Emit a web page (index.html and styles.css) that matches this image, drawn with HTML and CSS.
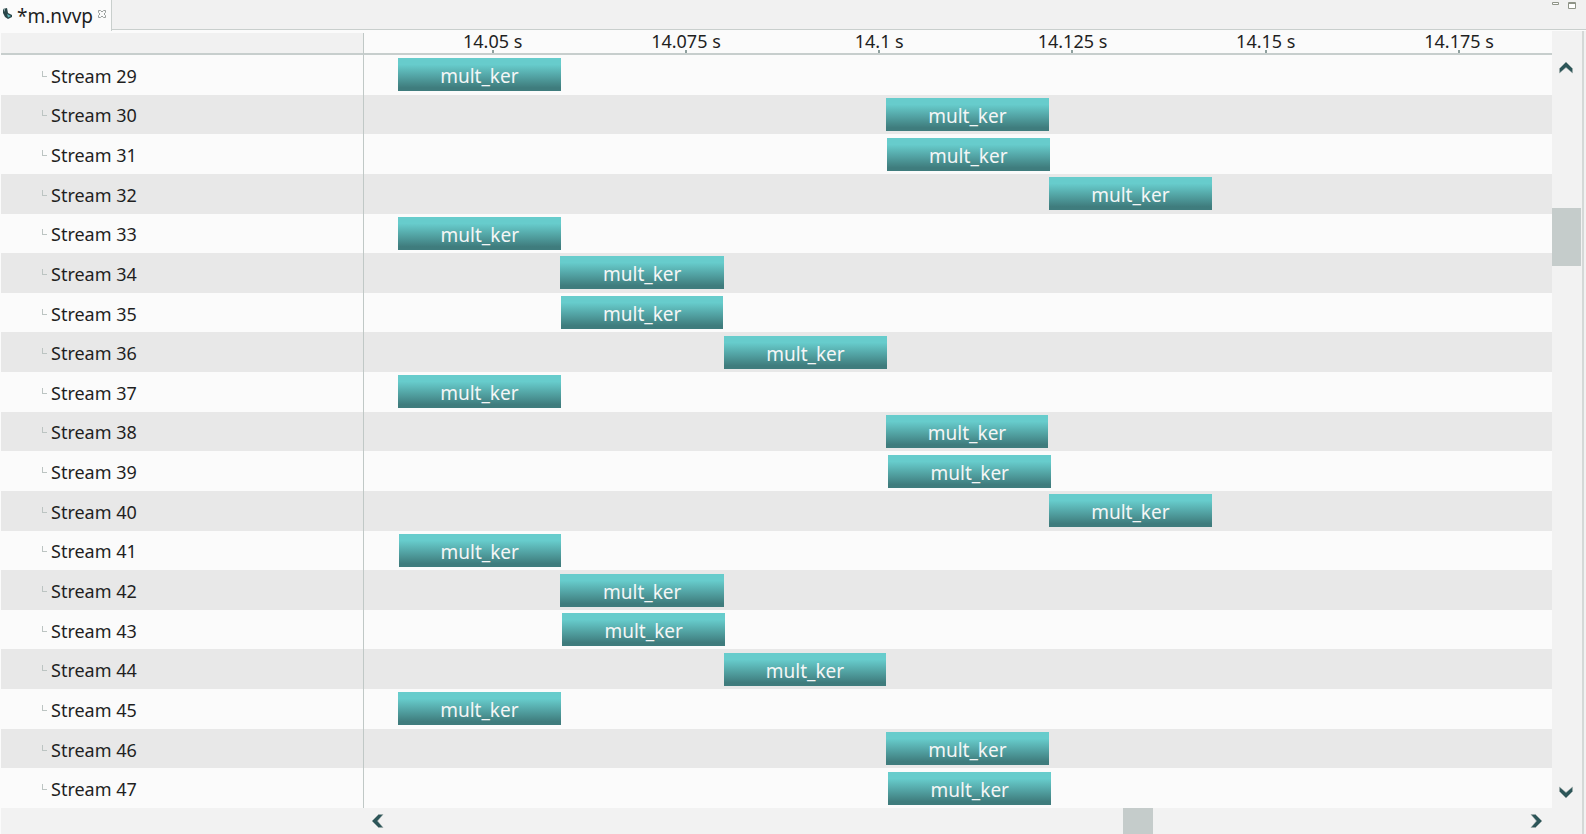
FILE: index.html
```
<!DOCTYPE html>
<html lang="en">
<head>
<meta charset="utf-8">
<title>m.nvvp</title>
<link rel="stylesheet" href="styles.css">
</head>
<body>
<div class="window">
  <header class="tabbar">
    <div class="tab">
      <svg class="tab-icon" width="10" height="12" viewBox="0 0 10 12" aria-hidden="true"><path d="M1 1L5 0L6 5L10 7V9L6 11L3 9L1 5Z" fill="#2a4548"/><path d="M5 6L9 8L6 9.500Z" fill="#5fb5b8"/><path d="M1 1L3 1L3 4Z" fill="#8aa5a5"/></svg>
      <span class="tab-name">*m.nvvp</span>
      <button class="tab-close" aria-label="Close"><svg width="8" height="8" viewBox="0 0 8 8"><path d="M.5 .5H2.500L4 2L5.500 .5H7.500V2.500L6 4L7.500 5.500V7.500H5.500L4 6L2.500 7.500H.5V5.500L2 4L.5 2.500Z" fill="#fbfbfb" stroke="#9a9f9d"/></svg></button>
    </div>
    <div class="window-buttons">
      <button aria-label="Minimize"><svg width="8" height="9" viewBox="0 0 8 9"><path d="M.5 2.500H6.500V4.500H.5Z" fill="#fff" stroke="#8f9488"/></svg></button>
      <button aria-label="Maximize"><svg width="8" height="9" viewBox="0 0 8 9"><path d="M.5 2.500H7.500V8.500H.5ZM.5 3.500H7.500" fill="#fff" stroke="#8f9488"/></svg></button>
    </div>
  </header>
  <main class="view">
    <div class="ruler">
      <div class="ruler-side"></div>
      <div class="ticks">
        <span>14.05 s</span><span>14.075 s</span><span>14.1 s</span><span>14.125 s</span><span>14.15 s</span><span>14.175 s</span>
      </div>
    </div>
    <div class="rows">
      <div class="row"><div class="name">Stream 29</div><div class="lane"><div class="bar" style="margin-left:2.86%;width:13.700%">mult_ker</div></div></div>
      <div class="row"><div class="name">Stream 30</div><div class="lane"><div class="bar" style="margin-left:43.94%;width:13.700%">mult_ker</div></div></div>
      <div class="row"><div class="name">Stream 31</div><div class="lane"><div class="bar" style="margin-left:44.02%;width:13.700%">mult_ker</div></div></div>
      <div class="row"><div class="name">Stream 32</div><div class="lane"><div class="bar" style="margin-left:57.66%;width:13.700%">mult_ker</div></div></div>
      <div class="row"><div class="name">Stream 33</div><div class="lane"><div class="bar" style="margin-left:2.90%;width:13.700%">mult_ker</div></div></div>
      <div class="row"><div class="name">Stream 34</div><div class="lane"><div class="bar" style="margin-left:16.54%;width:13.760%">mult_ker</div></div></div>
      <div class="row"><div class="name">Stream 35</div><div class="lane"><div class="bar" style="margin-left:16.60%;width:13.640%">mult_ker</div></div></div>
      <div class="row"><div class="name">Stream 36</div><div class="lane"><div class="bar" style="margin-left:30.30%;width:13.720%">mult_ker</div></div></div>
      <div class="row"><div class="name">Stream 37</div><div class="lane"><div class="bar" style="margin-left:2.86%;width:13.700%">mult_ker</div></div></div>
      <div class="row"><div class="name">Stream 38</div><div class="lane"><div class="bar" style="margin-left:43.94%;width:13.640%">mult_ker</div></div></div>
      <div class="row"><div class="name">Stream 39</div><div class="lane"><div class="bar" style="margin-left:44.11%;width:13.760%">mult_ker</div></div></div>
      <div class="row"><div class="name">Stream 40</div><div class="lane"><div class="bar" style="margin-left:57.66%;width:13.700%">mult_ker</div></div></div>
      <div class="row"><div class="name">Stream 41</div><div class="lane"><div class="bar" style="margin-left:2.92%;width:13.640%">mult_ker</div></div></div>
      <div class="row"><div class="name">Stream 42</div><div class="lane"><div class="bar" style="margin-left:16.54%;width:13.760%">mult_ker</div></div></div>
      <div class="row"><div class="name">Stream 43</div><div class="lane"><div class="bar" style="margin-left:16.66%;width:13.760%">mult_ker</div></div></div>
      <div class="row"><div class="name">Stream 44</div><div class="lane"><div class="bar" style="margin-left:30.30%;width:13.640%">mult_ker</div></div></div>
      <div class="row"><div class="name">Stream 45</div><div class="lane"><div class="bar" style="margin-left:2.86%;width:13.700%">mult_ker</div></div></div>
      <div class="row"><div class="name">Stream 46</div><div class="lane"><div class="bar" style="margin-left:43.94%;width:13.700%">mult_ker</div></div></div>
      <div class="row"><div class="name">Stream 47</div><div class="lane"><div class="bar" style="margin-left:44.11%;width:13.760%">mult_ker</div></div></div>
    </div>
    <div class="scroll-y">
      <button aria-label="Scroll up"><svg width="14" height="12" viewBox="0 0 14 12"><path d="M7 0L13.500 6.500V11L7 5.500L.5 11V6.500Z" fill="#2c5558" stroke="#9eaaa8" stroke-width=".6"/></svg></button>
      <div class="track"><div class="before"></div><div class="thumb"></div><div class="after"></div></div>
      <button aria-label="Scroll down"><svg width="14" height="12" viewBox="0 0 14 12"><path d="M7 12L13.500 5.500V1L7 6.500L.5 1V5.500Z" fill="#2c5558" stroke="#9eaaa8" stroke-width=".6"/></svg></button>
    </div>
    <div class="scroll-x">
      <button aria-label="Scroll left"><svg width="12" height="14" viewBox="0 0 12 14"><path d="M0 7L6.500 .5H11L5.500 7L11 13.500H6.500Z" fill="#2c5558" stroke="#9eaaa8" stroke-width=".6"/></svg></button>
      <div class="track"><div class="before"></div><div class="thumb"></div><div class="after"></div></div>
      <button aria-label="Scroll right"><svg width="12" height="14" viewBox="0 0 12 14"><path d="M12 7L5.500 .5H1L6.500 7L1 13.500H5.500Z" fill="#2c5558" stroke="#9eaaa8" stroke-width=".6"/></svg></button>
    </div>
  </main>
</div>
</body>
</html>
```
FILE: styles.css
```
* { box-sizing: border-box; }
body {
  margin: 0;
  font-family: "Noto Sans", "Open Sans", sans-serif;
  font-size: 18px;
  color: #1f1f1f;
  background: #f2f2f2;
}
button {
  display: flex;
  align-items: center;
  justify-content: center;
  padding: 0;
  border: 0;
  background: none;
}
svg { display: block; }
.window {
  display: flex;
  flex-direction: column;
  height: 100vh;
}
.tabbar {
  display: flex;
  justify-content: space-between;
  flex: 0 0 31px;
  background: linear-gradient(#f1f1f1 29px, #c9cfcd 29px, #c9cfcd 30px, #fbfbfb 30px);
}
.tab {
  display: flex;
  align-items: flex-start;
  width: 112px;
  padding-left: 2px;
  background: #fbfbfb;
  border-right: 1px solid #c9cfcd;
}
.tab-icon { margin-top: 8px; }
.tab-name {
  margin-left: 5px;
  padding-top: 1px;
  font-size: 19px;
  line-height: 30px;
}
.tab-close { margin: 10px 0 0 5px; }
.window-buttons {
  display: flex;
  align-items: flex-start;
  gap: 8px;
  padding-right: 10px;
}
.view {
  display: grid;
  grid-template-columns: minmax(0, 1fr) 29px;
  grid-template-rows: 24px minmax(0, 1fr) 26px;
  flex: 1;
  min-height: 0;
  padding-right: 1px;
  margin-right: 2px;
  border-right: 2px solid #d5d8d7;
  border-left: 1px solid #fbfbfb;
}
.ruler {
  display: grid;
  grid-template-columns: 363px minmax(0, 1fr);
  background: #fbfbfb;
}
.ruler-side {
  margin-top: 2px;
  background: #f1f1f1;
  border-right: 1px solid #c0c8c6;
  border-bottom: 2px solid #c7cecd;
}
.ticks {
  display: flex;
  padding-left: 2.7%;
  border-bottom: 2px solid #c7cecd;
}
.ticks span {
  flex: 0 0 16.72%;
  line-height: 20px;
  text-align: center;
  background: linear-gradient(#8fa09e, #8fa09e) 50% 100% / 2px 3px no-repeat;
}
.rows {
  grid-column: 1;
  display: grid;
  grid-auto-rows: minmax(0, 1fr);
}
.row {
  display: grid;
  grid-template-columns: 363px minmax(0, 1fr);
  background: #fbfbfb;
}
.row:nth-child(even) { background: #e8e8e8; }
.name {
  display: flex;
  align-items: center;
  padding: 2px 0 0 41px;
  border-right: 1px solid #c0c8c6;
}
.name::before {
  content: "";
  width: 4px;
  height: 5px;
  margin: 0 4px 4px 0;
  border-left: 1px solid #bcc4c2;
  border-bottom: 1px solid #bcc4c2;
}
.lane {
  display: flex;
  align-items: center;
}
.bar {
  height: 33px;
  font-size: 19px;
  line-height: 37px;
  text-align: center;
  color: #f4f6f6;
  background: linear-gradient(#67cccc 20%, #3f7c7d 90%);
}
.scroll-y {
  grid-column: 2;
  grid-row: 1 / 3;
  display: flex;
  flex-direction: column;
  margin-top: 1px;
  background: #f2f2f2;
}
.scroll-y button { flex: 0 0 50px; padding: 22px 1px 0 0; }
.scroll-y button:last-child { padding: 18px 1px 0 0; }
.track {
  display: flex;
  flex: 1;
}
.scroll-y .track { flex-direction: column; }
.thumb { background: #c5cccb; }
.scroll-y .before { flex: 126; }
.scroll-y .thumb { flex: 58; }
.scroll-y .after { flex: 492; }
.scroll-x {
  grid-column: 1;
  display: flex;
  margin-left: 363px;
}
.scroll-x button { flex: 0 0 28px; }
.scroll-x button:last-child { padding-right: 4px; }
.scroll-x .before { flex: 731; }
.scroll-x .thumb { flex: 30; }
.scroll-x .after { flex: 371; }
```
